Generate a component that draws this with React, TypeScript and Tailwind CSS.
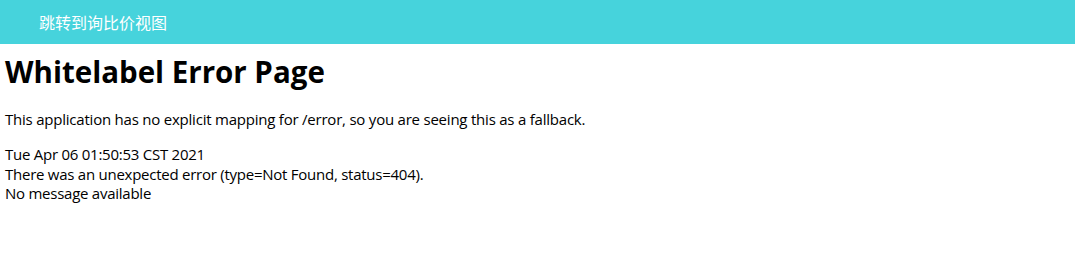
export default function App() {
  return (
    <div className="w-[1075px] h-[276px] bg-white text-black" style={{ fontFamily: '"Open Sans", "Noto Sans CJK SC", sans-serif' }}>
      <div className="h-[44px] bg-[#46d3dc] flex items-center pl-[39px]">
        <span className="text-white text-[16px]" style={{ fontFamily: '"Noto Sans CJK SC", sans-serif' }}>跳转到询比价视图</span>
      </div>
      <div className="px-[5px]">
        <h1 className="text-[29.5px] font-bold leading-[1.2] mt-[10px] mb-[19px] tracking-[0px]">Whitelabel Error Page</h1>
        <p className="text-[15px] leading-[20px] mb-[16px] tracking-[-0.22px] relative top-[1px]">This application has no explicit mapping for /error, so you are seeing this as a fallback.</p>
        <div className="text-[15px] leading-[19.5px] tracking-[-0.25px] relative top-[1px]">
          <div>Tue Apr 06 01:50:53 CST 2021</div>
          <div>There was an unexpected error (type=Not Found, status=404).</div>
          <div>No message available</div>
        </div>
      </div>
    </div>
  );
}
